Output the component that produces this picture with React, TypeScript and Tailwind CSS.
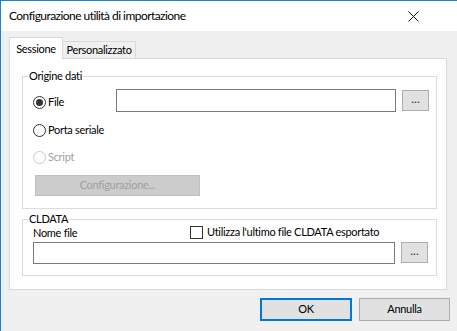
import React from 'react';

function Radio({ checked, disabled }: { checked?: boolean; disabled?: boolean }) {
  return (
    <span
      className={`flex h-[13px] w-[13px] shrink-0 items-center justify-center rounded-full border bg-white ${
        disabled ? 'border-[#cccccc]' : 'border-[#333333]'
      }`}
    >
      {checked && <span className="h-[7px] w-[7px] rounded-full bg-[#333333]" />}
    </span>
  );
}

function BrowseButton() {
  return (
    <button className="flex h-[21px] w-[27px] shrink-0 items-center justify-center border border-[#adadad] bg-[#e1e1e1] pb-[3px] text-[12px] leading-none tracking-normal text-[#333]">
      ...
    </button>
  );
}

export default function App() {
  return (
    <div
      className="flex h-[331px] w-[457px] flex-col overflow-hidden border-l border-t border-[#1883d7] bg-[#f0f0f0] text-[11px] tracking-[-0.3px] text-black"
      style={{ fontFamily: 'Lato, "Liberation Sans", sans-serif' }}
    >
      {/* title bar */}
      <div className="flex h-[30px] shrink-0 items-center justify-between bg-white pl-[8px] pr-[38px]">
        <span className="text-[12px] tracking-[-0.55px]">Configurazione utilità di importazione</span>
        <svg width="11" height="11" viewBox="0 0 11 11" className="mt-[1px]">
          <path d="M0.5 0.5 L10.5 10.5 M10.5 0.5 L0.5 10.5" stroke="#111" strokeWidth="1" />
        </svg>
      </div>

      {/* tabs */}
      <div className="ml-[8px] mt-[6px] flex items-end">
        <div className="relative z-10 -mb-px flex h-[22px] w-[54px] items-start justify-center border border-b-0 border-[#d9d9d9] bg-white pt-[3px]">
          Sessione
        </div>
        <div className="flex h-[17px] w-[73px] items-center justify-center border border-b-0 border-l-0 border-[#d9d9d9] bg-[#f0f0f0] pt-[1px]">
          Personalizzato
        </div>
      </div>

      {/* panel */}
      <div className="ml-[8px] flex h-[232px] w-[438px] flex-col border border-[#d9d9d9] bg-white pl-[12px]">
        {/* Origine dati */}
        <div className="relative mt-[17px] flex h-[133px] w-[415px] flex-col border border-[#dcdcdc] pl-[10px] pt-[12px]">
          <span className="absolute -top-[9px] left-[5px] bg-white px-[1px] leading-[16px]">Origine dati</span>
          <div className="flex h-[23px] items-center">
            <label className="mt-[4px] flex w-[83px] items-center gap-[2px]">
              <Radio checked />
              <span>File</span>
            </label>
            <div className="h-[23px] w-[280px] border border-[#7a7a7a] bg-white" />
            <div className="ml-[6px] mt-[1px] self-start">
              <BrowseButton />
            </div>
          </div>
          <label className="mt-[9px] flex h-[18px] items-center gap-[2px]">
            <Radio />
            <span>Porta seriale</span>
          </label>
          <label className="mt-[9px] flex h-[18px] items-center gap-[2px] text-[#a0a0a0]">
            <Radio disabled />
            <span>Script</span>
          </label>
          <button className="ml-[2px] mt-[9px] flex h-[21px] w-[165px] items-center justify-center border border-[#bfbfbf] bg-[#cccccc] text-[#a0a0a0]">
            Configurazione...
          </button>
        </div>

        {/* CLDATA */}
        <div className="relative mt-[10px] flex h-[57px] w-[415px] flex-col border border-[#dcdcdc] pl-[10px]">
          <span className="absolute -top-[9px] left-[5px] bg-white px-[1px] leading-[16px]">CLDATA</span>
          <div className="mt-[4px] flex h-[16px] items-center">
            <span className="mt-[3px] w-[157px]">Nome file</span>
            <label className="flex items-center gap-[4px]">
              <span className="h-[13px] w-[13px] border border-[#333333] bg-white" />
              <span>Utilizza l'ultimo file CLDATA esportato</span>
            </label>
          </div>
          <div className="mt-[2px] flex items-start">
            <div className="h-[22px] w-[362px] border border-[#7a7a7a] bg-white" />
            <div className="ml-[6px]">
              <BrowseButton />
            </div>
          </div>
        </div>
      </div>

      {/* buttons */}
      <div className="mt-[8px] flex justify-end gap-[7px] pr-[7px]">
        <button className="flex h-[23px] w-[92px] items-center justify-center border-2 border-[#0078d7] bg-[#e1e1e1]">
          OK
        </button>
        <button className="flex h-[23px] w-[91px] items-center justify-center border border-[#adadad] bg-[#e1e1e1]">
          Annulla
        </button>
      </div>
    </div>
  );
}
